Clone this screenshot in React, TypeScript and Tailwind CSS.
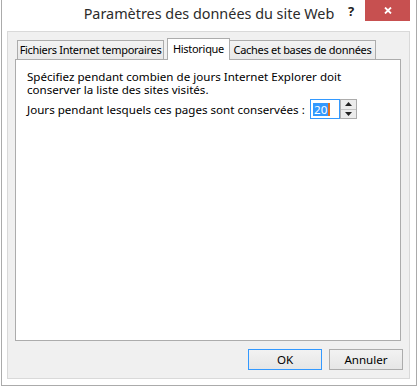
export default function App() {
  return (
    <div className="w-[418px] h-[387px] bg-white font-['Noto_Sans',sans-serif] text-[11.6px] text-black">
      <div className="ml-px w-[416px] h-[386px] border-x border-b border-[#ababab] bg-white flex flex-col">
        {/* title bar */}
        <div className="relative h-[31px] shrink-0 flex items-center justify-center">
          <span className="text-[14.4px] leading-none text-[#2b2b2b] -mt-[2px]">Paramètres des données du site Web</span>
          <span className="absolute left-[346px] top-[3px] text-[13px] font-bold text-[#222] leading-[16px]">?</span>
          <div className="absolute right-[6px] top-0 w-[45px] h-[21px] bg-[#c75050] flex items-center justify-center">
            <svg width="8" height="7" viewBox="0 0 8 7">
              <path d="M1 0.5 L7 6.5 M7 0.5 L1 6.5" stroke="white" strokeWidth="1.8" />
            </svg>
          </div>
        </div>
        {/* client area */}
        <div className="ml-[5px] w-[403px] h-[348px] shrink-0 border border-[#d9d9d9] bg-[#f0f0f0] pt-[6px] flex flex-col">
          <div className="flex items-end h-[21px] pl-[9px] text-[11px] tracking-[-0.3px]">
            <div className="w-[147px] h-[19px] border border-b-0 border-[#acacac] bg-linear-to-b from-[#f3f3f3] to-[#e8e8e8] flex items-center justify-center whitespace-nowrap overflow-hidden">
              Fichiers Internet temporaires
            </div>
            <div className="relative z-10 ml-[3px] w-[63px] h-[22px] -mb-px border border-b-0 border-[#acacac] bg-white flex items-start pt-[2px] justify-center whitespace-nowrap overflow-hidden">
              Historique
            </div>
            <div className="w-[146px] h-[19px] border border-l-0 border-b-0 border-[#acacac] bg-linear-to-b from-[#f3f3f3] to-[#e8e8e8] flex items-center justify-center whitespace-nowrap overflow-hidden">
              Caches et bases de données
            </div>
          </div>
          <div className="ml-[7px] w-[386px] h-[282px] border border-[#acacac] bg-white pl-[11px] pt-[10px] leading-[13px]">
            <div>Spécifiez pendant combien de jours Internet Explorer doit</div>
            <div>conserver la liste des sites visités.</div>
            <div className="flex items-center mt-[3px] h-[20px]">
              <div className="w-[283px] whitespace-nowrap">Jours pendant lesquels ces pages sont conservées :</div>
              <div className="w-[30px] h-[20px] border border-[#3399ff] bg-white flex items-center pl-[2px]">
                <span className="bg-[#3399ff] text-white h-[13px] leading-[13px] px-[1px]">20</span>
                <span className="w-[2px] h-[13px] bg-[#e07020]" />
              </div>
              <div className="w-[17px] h-[20px] border border-[#acacac] bg-[#ececec] flex flex-col">
                <div className="flex-1 flex items-center justify-center border-b border-[#c4c4c4]">
                  <svg width="7" height="4" viewBox="0 0 7 4"><path d="M3.5 0 L7 4 L0 4 Z" fill="#222" /></svg>
                </div>
                <div className="flex-1 flex items-center justify-center">
                  <svg width="7" height="4" viewBox="0 0 7 4"><path d="M0 0 L7 0 L3.5 4 Z" fill="#222" /></svg>
                </div>
              </div>
            </div>
          </div>
          <div className="flex justify-end gap-[7px] mt-[8px] pr-[6px]">
            <button className="w-[74px] h-[21px] border border-[#3399ff] bg-linear-to-b from-[#f2f2f2] to-[#e6e6e6] flex items-center justify-center">OK</button>
            <button className="w-[74px] h-[21px] border border-[#acacac] bg-linear-to-b from-[#f2f2f2] to-[#e6e6e6] flex items-center justify-center">Annuler</button>
          </div>
        </div>
      </div>
    </div>
  );
}
